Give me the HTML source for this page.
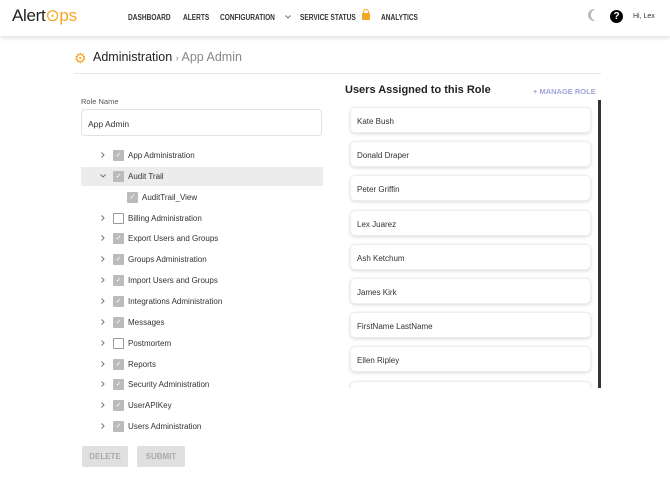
<!DOCTYPE html>
<html><head><style>
body{margin:0;width:670px;height:481px;background:#fff;font-family:"Liberation Sans",sans-serif;position:relative;overflow:hidden}
.a{position:absolute}
.nav{left:0;top:0;width:670px;height:36px;background:#fff;box-shadow:0 2px 4px rgba(0,0,0,.12)}
.ni{top:13px;font-size:8px;font-weight:bold;color:#333;transform:scaleX(.82);transform-origin:left;white-space:nowrap}
.row{left:81px;width:241px;height:20px;font-size:8px;color:#333}
.row svg{position:absolute;left:19px;top:7px}
.cb{position:absolute;width:9px;height:9px;background:#bbb;border:1px solid #bbb;border-radius:1px;color:#fff;font-size:7px;line-height:9px;text-align:center}
.cb.e{background:#fff;border-color:#999}
.row .t{position:absolute;top:4px}
.card{left:350px;width:241px;height:26px;border:1px solid #eee;border-radius:5px;box-shadow:0 1px 3px rgba(0,0,0,.15);font-size:8px;color:#333;box-sizing:border-box;padding:9px 0 0 6px;background:#fff}
.btn{top:446px;height:21px;background:#e0e0e0;color:#aaa;font-size:8px;font-weight:bold;text-align:center;line-height:21px;border-radius:2px}
</style></head><body>
<div class="a nav"></div>
<div class="a" style="left:12px;top:6px;font-size:17px;color:#222;letter-spacing:-.3px">Alert<span style="color:#f5a623">⊙ps</span></div>
<div class="a ni" style="left:128px">DASHBOARD</div>
<div class="a ni" style="left:183px">ALERTS</div>
<div class="a ni" style="left:220px">CONFIGURATION</div>
<svg class="a" style="left:285px;top:15px" width="6" height="4"><path d="M0.5 0.5L3 3L5.5 0.5" fill="none" stroke="#777" stroke-width="1"/></svg>
<div class="a ni" style="left:300px">SERVICE STATUS</div>
<div class="a" style="left:362px;top:13px;width:8px;height:7px;background:#f5a623;border-radius:1px"></div>
<div class="a" style="left:363px;top:9px;width:4px;height:5px;border:1px solid #f5a623;border-bottom:none;border-radius:3px 3px 0 0"></div>
<div class="a ni" style="left:381px">ANALYTICS</div>
<div class="a" style="left:591px;top:9px;width:12px;height:12px;border-radius:50%;box-shadow:-3px 0 0 0 #bbb"></div>
<div class="a" style="left:610px;top:10px;width:13px;height:13px;background:#000;border-radius:50%;color:#fff;font-size:10px;font-weight:bold;text-align:center;line-height:13px">?</div>
<div class="a" style="left:633px;top:13px;font-size:7px;color:#333">Hi, Lex</div>

<div class="a" style="left:74px;top:50px;font-size:14px;color:#f5a623">⚙</div>
<div class="a" style="left:93px;top:50px;font-size:12.5px;color:#222">Administration <span style="color:#888;font-size:9px">›</span> <span style="color:#888">App Admin</span></div>
<div class="a" style="left:74px;top:73px;width:527px;height:1px;background:#e6e6e6"></div>

<div class="a" style="left:81px;top:97px;font-size:7.5px;color:#555">Role Name</div>
<div class="a" style="left:81px;top:109px;width:241px;height:27px;border:1px solid #e2e2e2;border-radius:4px;box-sizing:border-box;font-size:8.5px;color:#333;padding:9px 0 0 6px">App Admin</div>

<div class="a" style="left:81px;top:167px;width:242px;height:19px;background:#ececec"></div>
<div id="tree"></div>

<div class="a" style="left:345px;top:84px;font-size:11px;font-weight:bold;color:#222">Users Assigned to this Role</div>
<div class="a" style="left:533px;top:87px;font-size:7.5px;font-weight:bold;color:#a0a4d8">+ MANAGE ROLE</div>
<div class="a" style="left:598px;top:100px;width:3px;height:288px;background:#333"></div>
<div class="a" style="left:345px;top:100px;width:252px;height:288px;overflow:hidden">
<div style="position:relative;left:-345px;top:-100px" id="cards"></div>
</div>

<div class="a btn" style="left:82px;width:46px">DELETE</div>
<div class="a btn" style="left:137px;width:48px">SUBMIT</div>
<script>
var R='<svg width="6" height="6"><path d="M1.5 0.5L4 3L1.5 5.5" fill="none" stroke="#777" stroke-width="1"/></svg>';
var D='<svg width="6" height="6"><path d="M0.5 1.5L3 4L5.5 1.5" fill="none" stroke="#777" stroke-width="1"/></svg>';
var items=[["App Administration",1,0,R],["Audit Trail",1,0,D],["AuditTrail_View",1,1,""],["Billing Administration",0,0,R],["Export Users and Groups",1,0,R],["Groups Administration",1,0,R],["Import Users and Groups",1,0,R],["Integrations Administration",1,0,R],["Messages",1,0,R],["Postmortem",0,0,R],["Reports",1,0,R],["Security Administration",1,0,R],["UserAPIKey",1,0,R],["Users Administration",1,0,R]];
var h="";items.forEach(function(it,i){var y=145+i*20.85;var ind=it[2]?14:0;
h+='<div class="a row" style="top:'+y+'px">'+it[3]+'<span class="cb'+(it[1]?'':' e')+'" style="left:'+(32+ind)+'px;top:5px">'+(it[1]?'✓':'')+'</span><span class="t" style="left:'+(47+ind)+'px;top:6px">'+it[0]+'</span></div>';});
document.getElementById("tree").innerHTML=h;
var u=["Kate Bush","Donald Draper","Peter Griffin","Lex Juarez","Ash Ketchum","James Kirk","FirstName LastName","Ellen Ripley",""];
h="";u.forEach(function(n,i){h+='<div class="a card" style="top:'+(107+i*34.2)+'px">'+n+'</div>';});
document.getElementById("cards").innerHTML=h;
</script>
</body></html>
